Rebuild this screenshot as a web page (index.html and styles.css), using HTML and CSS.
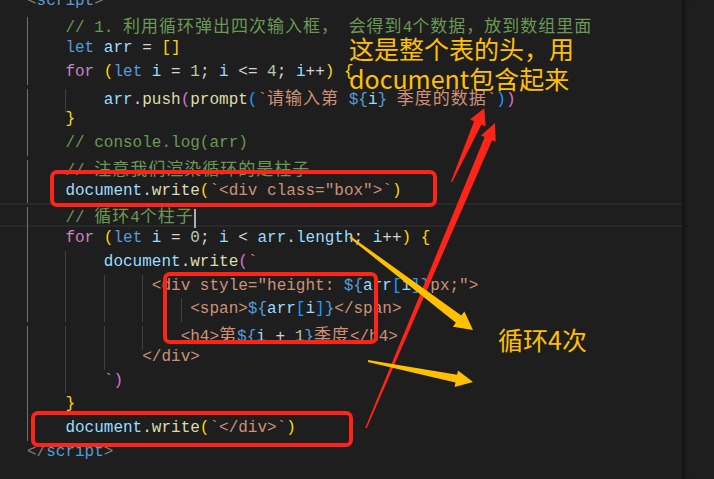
FILE: index.html
```html
<!DOCTYPE html>
<html>
    <head>
        <meta charset="utf-8" />
        <meta name="viewport" content="width=device-width, initial-scale=1" />
        <title>循环渲染柱子</title>
        <link rel="stylesheet" href="styles.css">
    </head>
    <body>
        <div class="editor">
            <div class="code">
                <div class="line"><span class="g">&lt;</span><span class="tag">script</span><span class="g">&gt;</span></div>
                <div class="line"><span class="ind on">    </span><span class="cm">// 1. <span class="cn">利用循环弹出四次输入框，</span> <span class="cn">会得到</span>4<span class="cn">个数据，放到数组里面</span></span></div>
                <div class="line"><span class="ind on">    </span><span class="k">let</span> <span class="v">arr</span> = <span class="b1">[]</span></div>
                <div class="line"><span class="ind on">    </span><span class="c">for</span> <span class="b1">(</span><span class="k">let</span> <span class="v">i</span> = <span class="n">1</span>; <span class="v">i</span> &lt;= <span class="n">4</span>; <span class="v">i</span>++<span class="b1">)</span> <span class="b1">{</span></div>
                <div class="line"><span class="ind on">    </span><span class="ind">    </span><span class="v">arr</span>.<span class="f">push</span><span class="b2">(</span><span class="f">prompt</span><span class="b3">(</span><span class="s">`<span class="cn">请输入第</span> </span><span class="t">${</span><span class="v">i</span><span class="t">}</span><span class="s"> <span class="cn">季度的数据</span>`</span><span class="b3">)</span><span class="b2">)</span></div>
                <div class="line"><span class="ind on">    </span><span class="b1">}</span></div>
                <div class="line"><span class="ind on">    </span><span class="cm">// console.log(arr)</span></div>
                <div class="line"><span class="ind on">    </span><span class="cm">// <span class="cn">注意我们渲染循环的是柱子</span></span></div>
                <div class="line"><span class="ind on">    </span><span class="v">document</span>.<span class="f">write</span><span class="b1">(</span><span class="s">`&lt;div class="box"&gt;`</span><span class="b1">)</span></div>
                <div class="line cur"><span class="ind on">    </span><span class="cm">// <span class="cn">循环</span>4<span class="cn">个柱子</span></span><span class="caret"></span></div>
                <div class="line"><span class="ind on">    </span><span class="c">for</span> <span class="b1">(</span><span class="k">let</span> <span class="v">i</span> = <span class="n">0</span>; <span class="v">i</span> &lt; <span class="v">arr</span>.<span class="v">length</span>; <span class="v">i</span>++<span class="b1">)</span> <span class="b1">{</span></div>
                <div class="line"><span class="ind on">    </span><span class="ind">    </span><span class="v">document</span>.<span class="f">write</span><span class="b2">(</span><span class="s">`</span></div>
                <div class="line"><span class="ind on">    </span><span class="ind">    </span><span class="ind">    </span><span class="ind"> </span><span class="s">&lt;div style="height: </span><span class="t">${</span><span class="v">arr</span><span class="b3">[</span><span class="v">i</span><span class="b3">]</span><span class="t">}</span><span class="s">px;"&gt;</span></div>
                <div class="line"><span class="ind on">    </span><span class="ind">    </span><span class="ind">    </span><span class="ind">    </span><span class="ind"> </span><span class="s">&lt;span&gt;</span><span class="t">${</span><span class="v">arr</span><span class="b3">[</span><span class="v">i</span><span class="b3">]</span><span class="t">}</span><span class="s">&lt;/span&gt;</span></div>
                <div class="line"><span class="ind on">    </span><span class="ind">    </span><span class="ind">    </span><span class="ind">    </span><span class="s">&lt;h4&gt;<span class="cn">第</span></span><span class="t">${</span><span class="v">i</span> + <span class="n">1</span><span class="t">}</span><span class="s"><span class="cn">季度</span>&lt;/h4&gt;</span></div>
                <div class="line"><span class="ind on">    </span><span class="ind">    </span><span class="ind">    </span><span class="s">&lt;/div&gt;</span></div>
                <div class="line"><span class="ind on">    </span><span class="ind">    </span><span class="s">`</span><span class="b2">)</span></div>
                <div class="line"><span class="ind on">    </span><span class="b1">}</span></div>
                <div class="line"><span class="ind on">    </span><span class="v">document</span>.<span class="f">write</span><span class="b1">(</span><span class="s">`&lt;/div&gt;`</span><span class="b1">)</span></div>
                <div class="line"><span class="g">&lt;/</span><span class="tag">script</span><span class="g">&gt;</span></div>
            </div>
            <div class="scroll"></div>

            <!-- annotations drawn over the code -->
            <div class="mark mark-head"></div>
            <div class="mark mark-loop"></div>
            <div class="mark mark-foot"></div>
            <svg class="arrows" width="714" height="479" viewBox="0 0 714 479">
                <polygon class="red" points="450.9,181.7 474.1,121.3 470.0,119.4 484.3,108.3 485.6,126.4 481.5,124.5 452.1,182.3"/>
                <polygon class="red" points="365.3,427.7 484.7,137.1 481.0,135.6 495,123 495.7,141.8 492.1,140.3 366.7,428.3"/>
                <polygon class="yellow" points="350.6,236.2 461.3,315.5 464.4,311.5 473,330 452.9,326.7 455.9,322.7 349.4,237.8"/>
                <polygon class="yellow" points="368.2,360 457.1,374.8 458.0,370.4 473,382 454.6,387.0 455.5,382.6 367.8,362"/>
            </svg>
            <p class="note note-head">这是整个表的头，用<br>document包含起来</p>
            <p class="note note-loop">循环4次</p>
        </div>
    </body>
</html>
```

FILE: styles.css
```css
*,*::before,*::after{
    box-sizing: border-box;
}
body{
    margin:0;
    padding:0;
    background:#1e1e1e;
}
.editor{
    position: relative;
    display:flex;
    width:714px;
    height:479px;
    overflow:hidden;
    background:#1e1e1e;
}
.code{
    flex:1;
    margin-top:-10.5px;
    font-family:"Liberation Mono", "Noto Sans CJK SC", monospace;
    font-size:16px;
    color:#d4d4d4;
}
.line{
    height:23.75px;
    line-height:23.75px;
    padding-left:27px;
    white-space:pre;
}
.line.cur{
    box-shadow: inset 0 2px 0 #282828, inset 0 -2px 0 #282828;
}
.scroll{
    width:32px;
    flex-shrink:0;
    background:#1e1e1e;
    box-shadow: inset 5px 0 5px -4px #0c0c0c;
}

/* indent guides */
.ind{
    display:inline-block;
    height:23.75px;
    box-shadow: inset 1px 0 0 #404040;
}
.ind.on{
    box-shadow: inset 1px 0 0 #707070;
}
.caret{
    display:inline-block;
    width:2px;
    height:19px;
    vertical-align:middle;
    background:#aeafad;
}
.cn{
    font-family:"Noto Sans CJK SC", sans-serif;
    font-size:17px;
    letter-spacing:1px;
}

/* tokens */
.k{ color:#569cd6; }
.c{ color:#c586c0; }
.v{ color:#9cdcfe; }
.f{ color:#dcdcaa; }
.n{ color:#b5cea8; }
.s{ color:#ce9178; }
.cm{ color:#6a9955; }
.t{ color:#569cd6; }
.g{ color:#808080; }
.tag{ color:#569cd6; }
.b1{ color:#ffd700; }
.b2{ color:#da70d6; }
.b3{ color:#179fff; }

/* annotations */
.mark{
    position:absolute;
    border:4px solid #ff2418;
    border-radius:7px;
}
.mark-head{ left:50px; top:170px; width:387px; height:37px; }
.mark-loop{ left:163px; top:272px; width:215px; height:72px; }
.mark-foot{ left:31px; top:411px; width:322px; height:36px; }

.arrows{
    position:absolute;
    left:0;
    top:0;
    pointer-events:none;
}
.red{ fill:#ff2418; }
.yellow{ fill:#ffc000; }

.note{
    position:absolute;
    margin:0;
    font-family:"Noto Sans CJK SC", sans-serif;
    font-size:25px;
    line-height:30px;
    color:#ffc000;
}
.note-head{ left:349px; top:33px; }
.note-loop{ left:498px; top:324px; }
```
